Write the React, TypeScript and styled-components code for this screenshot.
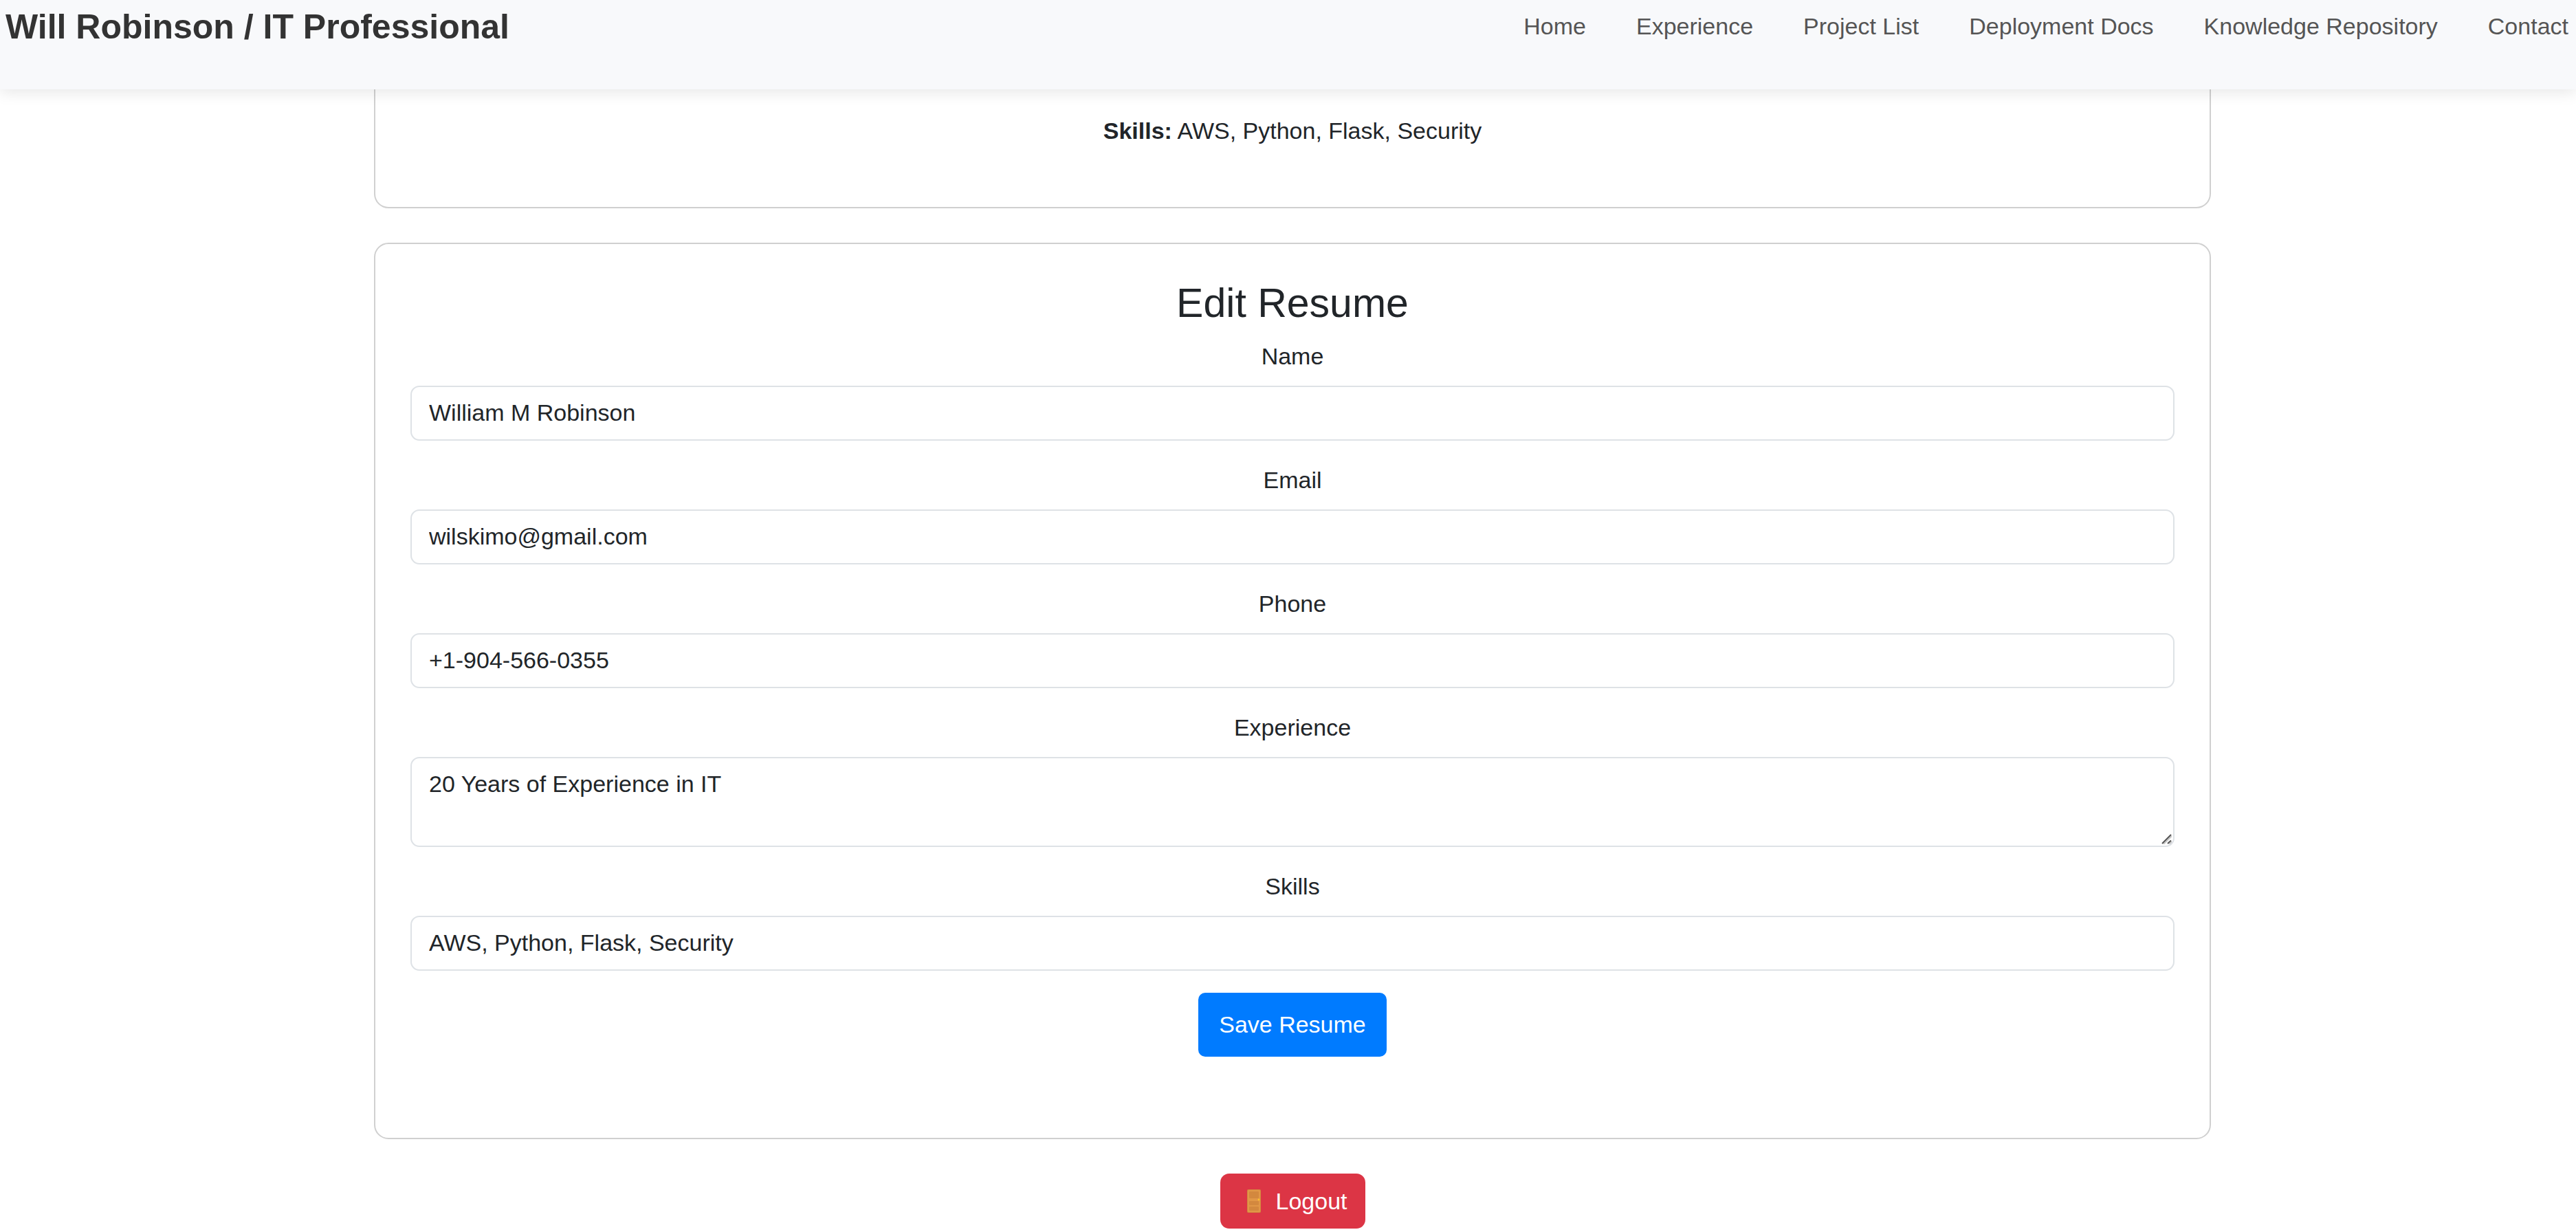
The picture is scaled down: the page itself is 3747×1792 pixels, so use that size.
import React from "react";
import styled, { createGlobalStyle } from "styled-components";

const GlobalStyle = createGlobalStyle`
  *, *::before, *::after { box-sizing: border-box; }
  body {
    margin: 0;
    background: #fff;
    color: #212529;
    font-family: "Liberation Sans", Arial, sans-serif;
    font-size: 34px;
    line-height: 50px;
  }
`;

const Header = styled.header`
  position: sticky;
  top: 0;
  z-index: 1;
  display: flex;
  align-items: center;
  justify-content: space-between;
  padding: 2px 11px 53px 8px;
  background: #f8f9fb;
  box-shadow: 0 4px 21px rgba(0, 0, 0, 0.1);
`;

const Brand = styled.a`
  color: #333;
  font-size: 50px;
  font-weight: 700;
  line-height: 75px;
  text-decoration: none;
`;

const NavList = styled.ul`
  display: flex;
  gap: 73px;
  margin: 0;
  padding: 0 0 4px;
  list-style: none;
`;

const NavLink = styled.a`
  color: #555;
  text-decoration: none;
`;

const Main = styled.main`
  display: flex;
  flex-direction: column;
  align-items: center;
  gap: 50px;
  padding: 0 0 5px 13px;
`;

const Card = styled.section<{ $continued?: boolean }>`
  width: 100%;
  max-width: 2672px;
  padding: ${(p) => (p.$continued ? "35px 51px 51px" : "51px")};
  border: 2px solid #d0d0d0;
  border-top-width: ${(p) => (p.$continued ? "0" : "2px")};
  border-radius: ${(p) => (p.$continued ? "0 0 21px 21px" : "21px")};
  text-align: center;
`;

const Detail = styled.p`
  margin: 0 0 35px;
`;

const Title = styled.h2`
  margin: 0 0 16px;
  font-size: 59px;
  font-weight: 400;
  line-height: 71px;
`;

const Form = styled.form`
  display: flex;
  flex-direction: column;
  align-items: center;
  gap: 32px;
  padding-bottom: 67px;
`;

const Field = styled.div`
  position: relative;
  display: flex;
  flex-direction: column;
  align-items: center;
  gap: 18px;
  width: 100%;
`;

const Input = styled.input`
  display: block;
  width: 100%;
  height: 80px;
  margin: 0;
  padding: 12px 25px 14px;
  border: 2px solid #dee2e6;
  border-radius: 13px;
  background: #fff;
  color: inherit;
  font: inherit;
`;

const TextArea = styled(Input)`
  height: 131px;
  resize: none;
  overflow: auto;
`;

const Grip = styled.svg`
  position: absolute;
  right: 4px;
  bottom: 4px;
  width: 15px;
  height: 15px;
  pointer-events: none;
`;

const Button = styled.button`
  border: 0;
  color: #fff;
  font: inherit;
  cursor: pointer;
`;

const SaveButton = styled(Button)`
  padding: 21px 30px;
  border-radius: 10px;
  background: #007bff;
  line-height: 51px;
`;

const LogoutButton = styled(Button)`
  display: flex;
  align-items: center;
  gap: 9px;
  padding: 15px 26px;
  border-radius: 13px;
  background: #dc3545;
`;

const navItems = [
  "Home",
  "Experience",
  "Project List",
  "Deployment Docs",
  "Knowledge Repository",
  "Contact",
];

const fields = [
  { id: "name", label: "Name", type: "text", value: "William M Robinson" },
  { id: "email", label: "Email", type: "email", value: "wilskimo@gmail.com" },
  { id: "phone", label: "Phone", type: "tel", value: "+1-904-566-0355" },
  { id: "experience", label: "Experience", type: "multiline", value: "20 Years of Experience in IT" },
  { id: "skills", label: "Skills", type: "text", value: "AWS, Python, Flask, Security" },
];

const DoorIcon = () => (
  <svg width="46" height="34" viewBox="0 0 46 34" aria-hidden="true">
    <rect x="13" y="0" width="20" height="34" rx="2" fill="#d3883e" />
    <rect x="14" y="1" width="18" height="32" rx="1" fill="#e19747" />
    <rect x="16" y="3" width="14" height="10" rx="1" fill="#d3883e" />
    <rect x="16" y="17" width="14" height="6" rx="1" fill="#d3883e" />
    <rect x="16" y="25" width="14" height="6" rx="1" fill="#d3883e" />
    <circle cx="30" cy="15" r="1.4" fill="#fcc02e" />
  </svg>
);

export default function App() {
  return (
    <>
      <GlobalStyle />
      <Header>
        <Brand href="#">Will Robinson / IT Professional</Brand>
        <nav>
          <NavList>
            {navItems.map((item) => (
              <li key={item}>
                <NavLink href="#">{item}</NavLink>
              </li>
            ))}
          </NavList>
        </nav>
      </Header>
      <Main>
        <Card $continued>
          <Detail>
            <strong>Skills:</strong> AWS, Python, Flask, Security
          </Detail>
        </Card>
        <Card>
          <Title>Edit Resume</Title>
          <Form onSubmit={(e) => e.preventDefault()}>
            {fields.map((f) => (
              <Field key={f.id}>
                <label htmlFor={f.id}>{f.label}</label>
                {f.type === "multiline" ? (
                  <>
                    <TextArea as="textarea" id={f.id} defaultValue={f.value} />
                    <Grip viewBox="0 0 15 15" aria-hidden="true">
                      <path d="M3 15 L15 3 M11 15 L15 11" stroke="#c8c8c8" strokeWidth="2" />
                      <path d="M1 14 L14 1 M9 14 L14 9.5" stroke="#555" strokeWidth="2" />
                    </Grip>
                  </>
                ) : (
                  <Input id={f.id} type={f.type} defaultValue={f.value} />
                )}
              </Field>
            ))}
            <SaveButton type="submit">Save Resume</SaveButton>
          </Form>
        </Card>
        <LogoutButton type="button">
          <DoorIcon />
          Logout
        </LogoutButton>
      </Main>
    </>
  );
}
